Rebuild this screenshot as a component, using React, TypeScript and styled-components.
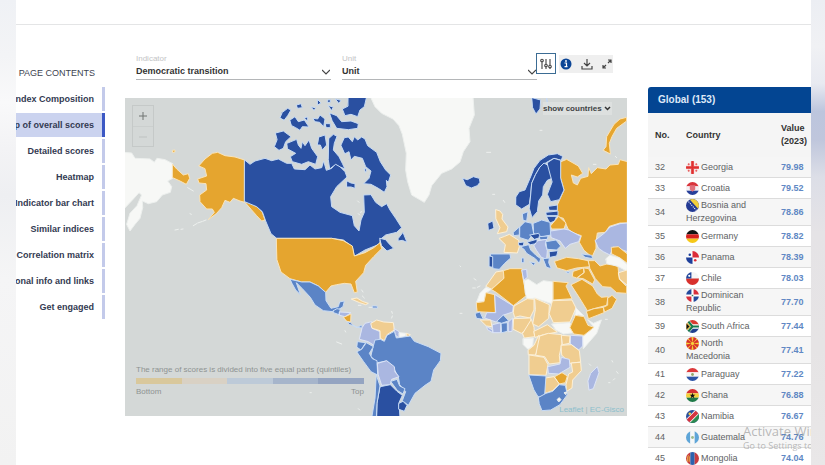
import React from "react";
import styled, { createGlobalStyle, css } from "styled-components";

const GlobalStyle = createGlobalStyle`
  * { box-sizing: border-box; }
  body { margin: 0; background: #fff; font-family: "Liberation Sans", Arial, sans-serif; color: #333; }
  button, select { font-family: inherit; }
`;

/* ---------- frame ---------- */

const Shell = styled.div`
  display: grid;
  grid-template-columns: 16px minmax(0, 1fr) 14px;
  height: 100vh;
  overflow: hidden;
`;
const LeftEdge = styled.div`
  background: linear-gradient(180deg, #eff1f5 0%, #f3f4f6 12%, #f9f9fa 22%, #f3f3f5 32%, #eeeff2 42%, #f5f5f6 60%, #f2f2f2 100%);
`;
const RightEdge = styled.div`
  background: linear-gradient(180deg, #eceef3 0%, #f0f1f4 10%, #e8eaf1 18%, #bcc5dd 24%, #bfc6dc 30%, #dcdee7 38%, #e5e3e6 50%, #e6e4e5 75%, #e9e7e8 100%);
`;
const Page = styled.div`
  position: relative;
  overflow: hidden;
  background: #fff;
`;
const Header = styled.header`
  height: 25px;
  border-bottom: 1px solid #e4e5e6;
`;
const Main = styled.main`
  display: grid;
  grid-template-columns: 89px minmax(0, 1fr) 163px;
  align-items: start;
`;

/* ---------- page contents ---------- */

const Contents = styled.nav`
  display: flex;
  flex-direction: column;
  gap: 2px;
  padding-top: 42px;
`;
const ContentsTitle = styled.div`
  height: 18px;
  padding-right: 10px;
  text-align: right;
  font-size: 9px;
  line-height: 13px;
  color: #3d4350;
  white-space: nowrap;
`;
const ContentsLink = styled.a<{ $active?: boolean }>`
  display: flex;
  justify-content: flex-end;
  height: 24px;
  padding-right: 8px;
  border-right: 3px solid ${(p) => (p.$active ? "#3c58c4" : "#c3caea")};
  background: ${(p) => (p.$active ? "#cbd3ef" : "transparent")};
  color: #333a52;
  font-size: 9px;
  font-weight: bold;
  line-height: 24px;
  text-decoration: none;
  white-space: nowrap;
`;

/* ---------- map column ---------- */

const Center = styled.section`
  padding: 28px 21px 0 20px;
`;
const Controls = styled.div`
  display: flex;
  align-items: flex-start;
  height: 45px;
  padding: 0 14px 0 11px;
`;
const Field = styled.label`
  display: block;
  position: relative;
  flex: 1;
  min-width: 0;
  border-bottom: 1px solid #b4b6b8;
  & + & { margin-left: 11px; }
`;
const FieldName = styled.span`
  display: block;
  font-size: 8px;
  line-height: 11px;
  color: #c3c4c6;
`;
const FieldSelect = styled.select`
  display: block;
  appearance: none;
  width: 100%;
  height: 15px;
  padding: 0;
  border: 0;
  background: transparent;
  color: #333;
  font-size: 9px;
  font-weight: bold;
  line-height: 15px;
`;
const FieldArrow = styled.svg`
  position: absolute;
  right: 1px;
  bottom: 4px;
  width: 8px;
  height: 6px;
`;
const Toolbar = styled.div`
  display: flex;
  align-items: center;
  margin-left: -1px;
  gap: 3px;
`;
const ToolGroup = styled.div`
  display: flex;
  height: 18px;
  background: #efefef;
`;
const Tool = styled.button<{ $framed?: boolean }>`
  display: flex;
  align-items: center;
  justify-content: center;
  width: 18px;
  height: 18px;
  padding: 0;
  border: 0;
  background: transparent;
  ${(p) => p.$framed && css`
    width: 20px;
    height: 21px;
    background: #fff;
    border: 1px solid #3b6c94;
  `}
`;
const InfoTool = styled(Tool)` width: 14px; `;
const DownloadTool = styled(Tool)` width: 28px; `;
const ExpandTool = styled(Tool)` width: 12px; `;

const MapBox = styled.div`
  position: relative;
  background: #d4d8d7;
`;
const MapArt = styled.svg`
  display: block;
  width: 100%;
  height: auto;
`;
const ZoomBox = styled.div`
  position: absolute;
  left: 7px;
  top: 7px;
  width: 22px;
  border: 1px solid #c5c9c8;
`;
const ZoomButton = styled.button<{ $off?: boolean }>`
  display: flex;
  align-items: center;
  justify-content: center;
  width: 20px;
  height: 20px;
  padding: 0;
  border: 0;
  background: transparent;
  color: ${(p) => (p.$off ? "#bec2c1" : "#707473")};
  & + & { border-top: 1px solid #cbcfce; }
`;
const CountryPicker = styled.label`
  position: absolute;
  right: 15px;
  top: 4px;
  display: flex;
  align-items: center;
  width: 69px;
  height: 13px;
  background: rgba(225, 228, 227, 0.7);
`;
const CountrySelect = styled.select`
  appearance: none;
  width: 100%;
  height: 13px;
  padding: 0;
  border: 0;
  background: transparent;
  color: #3f4344;
  font-size: 8px;
  font-weight: bold;
`;
const PickerArrow = styled.svg`
  position: absolute;
  right: 1px;
  top: 4px;
  width: 7px;
  height: 5px;
`;
const Legend = styled.div`
  position: absolute;
  left: 11px;
  bottom: 18px;
  width: 228px;
  font-size: 8px;
  line-height: 12px;
  color: #8e9392;
  white-space: nowrap;
`;
const LegendBar = styled.div`
  display: flex;
  height: 6px;
  margin: 2px 0;
`;
const LegendPart = styled.span<{ $tone: string }>`
  flex: 1;
  background: ${(p) => p.$tone};
`;
const LegendEnds = styled.div`
  display: flex;
  justify-content: space-between;
`;
const Credits = styled.div`
  position: absolute;
  right: 3px;
  bottom: 1px;
  font-size: 8px;
  line-height: 10px;
  color: #a3b9ba;
`;
const CreditLink = styled.a`
  color: #8cbfcc;
  text-decoration: none;
`;

/* ---------- ranking ---------- */

const Ranking = styled.section`
  padding-top: 62px;
`;
const RankingTitle = styled.h2`
  margin: 0;
  height: 26px;
  padding-left: 10px;
  border-radius: 3px 0 0 0;
  background: #034592;
  color: #dfe9f8;
  font-size: 10px;
  font-weight: bold;
  line-height: 26px;
`;
const Table = styled.table`
  width: 100%;
  table-layout: fixed;
  border-collapse: separate;
  border-spacing: 0;
  font-size: 9px;
  line-height: 13px;
`;
const Th = styled.th<{ $w?: number }>`
  width: ${(p) => (p.$w ? `${p.$w}px` : "auto")};
  height: 44px;
  padding: 0;
  background: #f5f5f5;
  color: #333;
  text-align: left;
  &:first-child { padding-left: 7px; }
`;
const Row = styled.tr`
  background: #fff;
  &:nth-child(odd) { background: #f6f6f6; }
`;
const Td = styled.td`
  height: 21px;
  padding: 0;
  border-bottom: 1px solid #dcdcdc;
  color: #606264;
  &:first-child { padding-left: 7px; }
`;
const CountryCell = styled(Td)`
  padding-right: 20px;
`;
const ValueCell = styled(Td)`
  color: #6088c4;
  font-weight: bold;
`;
const FlagArt = styled.svg`
  width: 13px;
  height: 13px;
  margin-right: 2px;
  vertical-align: top;
  border-radius: 50%;
`;

const Watermark = styled.div`
  position: absolute;
  left: 727px;
  bottom: 12px;
  font-family: "Open Sans", "Noto Sans", sans-serif;
  font-size: 9px;
  line-height: 14px;
  color: rgba(130, 130, 130, 0.55);
  white-space: nowrap;
  pointer-events: none;
`;
const WatermarkTitle = styled.div`
  font-size: 13px;
  line-height: 16px;
`;

/* ---------- map shapes ---------- */

const tones: Record<string, [string, string]> = {
  o: ["#e5a52f", "#fae4b9"],
  p: ["#f0cd90", "#fdf0d6"],
  l: ["#aab7e1", "#dce4f7"],
  m: ["#5b84c6", "#c9dcf5"],
  d: ["#2a50a1", "#c6daf4"],
  w: ["#f7f8f6", "#edf0ee"],
};

type Shape = [string, string];
type Sheet = { x: number; y: number; shapes: Shape[] };

const sheets: Sheet[] = [
  {
    x: 125, y: 95,
    shapes: [
      ["w", "M-6 172L20 174L30 190L75 192L88 202L96 190L120 194L143 206L143 250L128 258L140 275L136 292L112 300L95 320L70 326L52 318L53 338L45 370L30 388L15 408L5 388L15 355L36 332L50 300L42 293L25 312L-6 345Z"],
      ["o", "M143 208L155 222L175 240L190 236L194 250L184 268L165 258L143 248Z"],
      ["o", "M143 166L150 165L150 171L144 172Z"],
      ["o", "M222 212L240 192L262 175L278 172L300 182L330 186L359 195L359 322L345 318L325 310L315 322L300 316L290 338L275 355L250 374L268 352L262 342L245 342L225 320L224 300L245 285L243 266L222 264L218 252L245 243L240 222Z"],
      ["o", "M359 320L380 326L395 335L412 352L420 375L410 378L395 362L380 345Z"],
      ["w", "M205 392L215 386M218 384L230 380M233 379L243 375M150 405L160 403M168 403L174 402M188 278L205 288M195 356L199 358"],
    ],
  },
  {
    x: 265, y: 95,
    shapes: [
      ["w", "M316 5L330 35L350 55L384 72L402 92L412 118L424 175L422 225L428 260L440 300L478 322L492 300L500 272L530 235L560 222L585 201L595 170L615 140L612 100L628 60L624 5Z"],
      ["d", "M-61 195L-45 208L-30 198L0 190L20 197L40 192L65 205L80 205L88 222L120 224L135 210L150 222L170 218L176 198L184 226L200 220L212 205L225 215L240 230L246 246L215 275L197 305L200 335L225 352L262 362L268 392L282 408L288 375L298 352L296 300L318 299L332 322L350 335L365 326L375 345L392 370L410 398L395 412L362 420L345 434L345 447L300 465L268 484L262 455L235 435L200 430L35 430L18 416L2 378L-8 350L-25 335L-61 320Z"],
      ["d", "M400 430L414 412L426 442L412 436L400 438Z"],
      ["d", "M345 430L362 434L372 446L386 460L366 468L350 452Z"],
      ["d", "M228 150L238 128L250 126L262 140L268 125L278 135L290 126L300 132L308 152L335 172L346 200L362 225L377 240L370 262L364 256L366 275L358 292L340 280L318 268L296 266L312 250L318 228L302 215L292 190L268 184L258 195L252 170L240 176Z"],
      ["d", "M192 130L205 118L216 124L208 145L205 165L222 185L232 205L240 222L226 216L212 208L194 222L190 195Z"],
      ["d", "M66 145L95 133L100 150L108 160L112 140L120 152L132 135L140 160L158 185L152 208L130 200L110 208L82 200L76 185L92 175L68 162Z"],
      ["d", "M32 114L55 108L78 125L62 140L55 160L42 166L28 155L36 135Z"],
      ["d", "M162 126L180 120L185 150L172 165L166 150L158 150Z"],
      ["d", "M75 75L90 65L100 80L118 75L132 96L112 95L105 106L92 98L80 92Z"],
      ["d", "M45 68L52 52L68 40L78 45L68 62L58 75Z"],
      ["d", "M145 70L158 72L165 60L180 72L176 95L164 82L150 80Z"],
      ["d", "M194 54L215 62L230 80L258 78L280 86L278 100L250 104L215 100L202 78Z"],
      ["d", "M250 5L305 5L298 35L285 45L278 65L258 58L240 62L232 42L248 34Z"],
      ["d", "M95 30L108 26L112 38L98 40ZM118 68L128 66L128 78ZM188 15L196 14L196 22L188 22ZM138 36L152 38L148 46ZM158 14L168 24L158 30ZM190 32L205 36L200 46ZM212 12L228 16L222 25ZM182 86L196 86L196 98L184 98Z"],
      ["d", "M246 258L258 264L270 266L270 280L258 276L246 276Z"],
      ["d", "M298 220L306 224L302 232Z"],
      ["w", "M278 318L282 322M280 356L284 360M286 352L290 350"],
    ],
  },
  {
    x: 265, y: 240,
    shapes: [
      ["o", "M35 -5L200 -5L235 2L262 18L268 48L300 38L325 24L345 8L350 26L326 50L302 76L296 98L272 124L277 156L268 158L258 132L238 130L215 134L198 138L182 157L160 138L135 126L110 126L75 116L48 96L36 60Z"],
      ["m", "M76 118L110 126L135 126L160 138L182 157L183 182L198 205L220 200L224 186L238 183L234 200L222 208L212 216L175 212L150 195L136 172L112 146L94 128L106 164L92 150L82 132Z"],
      ["m", "M205 212L216 206L226 208L222 224L206 218Z"],
      ["l", "M224 216L258 218L240 230L224 226Z"],
      ["o", "M236 232L258 222L257 246L246 244Z"],
      ["d", "M246 246L256 248L264 256L256 254Z"],
      ["m", "M264 256L276 262L290 256L292 264L276 262Z"],
      ["p", "M260 177L276 174L292 184L310 190L302 194L284 188Z"],
      ["w", "M290 150L294 156M292 168L298 174M280 196L288 196M380 214L382 220M382 228L380 234M312 202L320 202M215 306L230 312M240 272L242 276M280 506L284 510M135 458L139 458"],
      ["m", "M322 198L336 198L338 204L324 204Z"],
      ["l", "M292 262L300 250L320 245L322 265L345 275L345 295L330 318L310 305L284 298Z"],
      ["p", "M318 250L335 240L356 246L385 248L388 270L366 284L358 302L346 295L345 272L322 265Z"],
      ["l", "M388 266L404 276L402 294L392 286Z"],
      ["w", "M403 278L422 280L420 292L404 292Z"],
      ["p", "M424 280L436 284L428 292Z"],
      ["m", "M325 318L330 300L346 298L358 304L366 286L388 274L394 294L436 288L448 304L490 320L528 340L526 362L506 390L498 424L480 436L450 460L430 496L412 482L422 455L404 434L400 410L390 392L365 363L338 368L318 350Z"],
      ["m", "M278 305L302 308L288 330L276 322Z"],
      ["m", "M276 335L290 328L304 308L325 320L313 340L322 356L336 362L338 405L318 395L296 365Z"],
      ["l", "M338 370L365 362L388 380L390 396L402 410L380 418L376 434L350 436L340 405Z"],
      ["m", "M378 424L396 418L404 438L420 446L414 462L398 452Z"],
      ["d", "M346 440L376 434L396 454L412 466L402 488L405 534L335 534L336 490Z"],
      ["d", "M402 490L414 484L426 496L418 514L402 508Z"],
      ["m", "M334 405L345 438L336 490L334 534L320 534L330 475Z"],
    ],
  },
  {
    x: 460, y: 95,
    shapes: [
      ["w", "M80 172L92 172M240 106L246 106M98 298L104 298M130 316L134 322M400 208L408 208M466 184L470 188"],
      ["d", "M216 8L242 15L240 42L228 57L218 38Z"],
      ["d", "M260 10L266 40L262 28Z"],
      ["d", "M8 250L22 254L40 245L58 250L60 262L52 272L34 279L18 272Z"],
      ["o", "M430 165L438 155L440 125L462 88L480 72L500 67L500 78L470 100L456 125L448 145L451 176Z"],
      ["o", "M303 200L320 193L355 213L368 235L352 246L334 240L340 264L352 270L362 250L384 244L386 218L394 236L412 218L438 222L450 210L475 208L480 194L502 200L502 384L480 384L448 394L436 412L412 414L408 440L408 460L396 486L372 466L358 442L364 422L340 414L325 403L310 370L290 364L292 330L300 312L312 285L302 250Z"],
      ["d", "M168 305L178 290L195 285L210 250L222 220L240 196L265 180L292 176L308 184L304 196L282 190L260 202L240 216L226 240L215 265L212 300L208 328L185 342L168 330Z"],
      ["d", "M240 216L252 204L272 216L276 250L262 256L250 275L248 300L236 318L232 350L216 368L208 340L212 300L215 265L226 240Z"],
      ["d", "M262 203L282 190L302 196L302 250L312 285L298 314L272 320L262 298L276 262Z"],
      ["m", "M188 356L204 350L200 378L190 376Z"],
      ["d", "M266 334L292 330L292 346L268 346ZM258 352L294 348L294 362L260 362ZM260 364L290 364L284 378L270 384Z"],
      ["o", "M272 392L296 364L318 384L312 402L275 402Z"],
      ["l", "M272 408L312 402L326 405L362 424L356 440L330 448L316 460L300 438L274 428Z"],
      ["l", "M406 436L436 412L450 396L480 386L502 384L502 470L460 456L450 480L430 470L416 460Z"],
      ["m", "M220 385L245 375L270 382L272 420L245 426L222 416Z"],
      ["m", "M180 395L195 380L215 385L221 415L205 436L180 428Z"],
      ["m", "M160 412L178 396L178 420L162 422Z"],
      ["p", "M118 430L134 424L148 418L176 436L178 455L172 474L132 472L136 450Z"],
      ["p", "M108 344L120 348L128 358L126 372L144 396L140 410L112 416L120 398L108 372Z"],
      ["d", "M84 385L98 378L102 400L86 406Z"],
    ],
  },
  {
    x: 460, y: 230,
    shapes: [
      ["d", "M210 15L236 10L242 22L224 28Z"],
      ["d", "M202 36L230 28L234 40L212 44Z"],
      ["d", "M176 38L192 36L190 48L178 47Z"],
      ["m", "M238 20L264 18L262 28L242 30Z"],
      ["l", "M234 32L260 28L256 42L262 62L260 88L244 82L230 62L222 48Z"],
      ["m", "M182 50L206 44L212 60L228 76L242 86L238 100L226 86L200 70L192 58Z"],
      ["m", "M258 35L288 30L302 48L290 60L262 58Z"],
      ["d", "M268 65L294 62L290 78L270 82Z"],
      ["m", "M250 86L268 84L266 98L274 116L260 112Z"],
      ["m", "M210 96L226 98L222 106ZM186 84L192 84L192 98L186 98Z"],
      ["m", "M92 72L150 72L152 84L134 100L118 118L100 116L94 100Z"],
      ["d", "M88 78L98 80L98 112L88 110Z"],
      ["o", "M284 94L320 82L355 86L384 92L390 110L350 114L320 122L292 114Z"],
      ["m", "M365 72L395 76L398 86L376 82Z"],
      ["m", "M318 126L328 124L326 130Z"],
      ["o", "M340 124L370 114L372 128L350 144L338 140ZM372 114L386 116L404 150L398 162L370 146L352 144L372 128Z"],
      ["o", "M386 92L404 92L420 108L448 100L474 110L478 148L500 170L500 190L470 188L452 172L428 170L406 146L390 116Z"],
      ["o", "M334 164L366 148L398 168L412 192L424 202L444 200L440 226L402 236L382 242L360 206Z"],
      ["o", "M380 244L402 236L430 232L432 248L386 266Z"],
      ["o", "M444 204L456 196L470 208L456 235L434 246L430 232L442 226Z"],
      ["o", "M455 52L475 50L502 72L502 100L480 84L456 72Z"],
      ["w", "M438 86L450 76L478 84L502 104L502 124L472 108L442 102Z"],
      ["p", "M476 128L502 120L502 166L480 148Z"],
      ["p", "M78 168L108 126L130 122L132 145L95 177Z"],
      ["w", "M50 216L60 190L78 172L94 178L76 190L72 214Z"],
      ["o", "M50 218L72 215L78 188L104 194L106 248L52 245Z"],
      ["o", "M95 178L132 145L130 122L150 116L186 116L190 150L200 196L160 227L110 188Z"],
      ["l", "M186 120L200 118L202 142L192 150Z"],
      ["w", "M193 152L205 148L230 164L250 152L278 156L278 222L225 204L202 208L196 190Z"],
      ["o", "M280 154L325 158L318 168L336 206L280 210Z"],
      ["l", "M105 194L160 228L158 246L128 256L108 276L74 264L80 248L106 248Z"],
      ["p", "M160 246L162 228L202 206L222 208L222 240L210 264L180 258L165 262Z"],
      ["p", "M225 205L268 224L266 265L236 290L218 282L226 240Z"],
      ["p", "M278 212L336 210L348 234L330 276L280 278L268 252Z"],
      ["w", "M276 282L330 278L340 308L310 312L288 300Z"],
      ["w", "M348 234L372 258L354 254L344 262Z"],
      ["w", "M384 270L400 280L424 270L410 310L370 356L368 320L402 292Z"],
      ["o", "M330 292L346 256L372 260L384 286L402 292L372 316L342 312Z"],
      ["l", "M332 316L368 318L368 348L356 360L332 342Z"],
      ["p", "M162 266L212 264L214 284L200 298L184 310L160 298Z"],
      ["m", "M46 250L60 246L70 268L50 265Z"],
      ["p", "M62 270L92 270L96 290L80 288Z"],
      ["l", "M80 290L98 300L98 308L84 300Z"],
      ["l", "M98 284L122 278L122 308L100 308Z"],
      ["m", "M110 274L130 255L146 272L126 280Z"],
      ["m", "M124 280L142 278L142 304L126 308Z"],
      ["l", "M145 276L158 264L156 304L146 305Z"],
      ["p", "M188 310L214 268L222 292L224 320L194 324Z"],
      ["p", "M222 304L262 284L292 306L250 314L226 322Z"],
      ["w", "M190 326L220 324L218 348L204 358L190 344Z"],
      ["p", "M205 360L222 346L236 316L242 345L226 375L206 374Z"],
      ["p", "M240 318L265 310L305 314L306 340L298 376L300 398L268 402L254 380L228 376Z"],
      ["p", "M305 316L330 318L328 340L308 344Z"],
      ["p", "M304 346L334 344L358 362L362 396L330 400L306 376Z"],
      ["p", "M208 375L252 382L264 404L258 436L208 434Z"],
      ["p", "M362 398L364 422L338 450L336 474L320 484L318 464L326 432L338 426L334 400Z"],
      ["l", "M264 410L300 402L304 382L328 388L330 412L296 432L266 430Z"],
      ["o", "M284 440L306 428L322 438L316 458L298 462Z"],
      ["p", "M256 444L282 440L298 462L278 482L255 490Z"],
      ["m", "M207 435L258 438L254 494L248 502L234 500L222 480Z"],
      ["m", "M236 502L258 490L278 484L298 464L316 466L322 494L300 524L272 540L246 542L238 522Z"],
      ["w", "M292 508L298 503L303 509L297 515ZM313 488L319 486L318 493Z"],
      ["l", "M384 452L392 430L412 410L417 428L400 476L388 480Z"],
      ["w", "M42 146L48 150M38 174L46 174M52 172L60 168M0 108L2 110M0 250L6 250M436 268L442 268M388 402L392 406M456 392L458 396M446 458L450 458M460 450L464 446M470 425L474 430"],
    ],
  },
];

const WorldMap = () => (
  <MapArt viewBox="125 98 502 318" role="img" aria-label="World map of overall scores">
    {sheets.map((s, i) => (
      <g key={i} transform={`translate(${s.x} ${s.y}) scale(0.33333)`} strokeLinejoin="round" strokeLinecap="round">
        {s.shapes.map(([tone, d], j) => (
          <path key={j} d={d} fill={tones[tone][0]} stroke={tones[tone][1]} strokeWidth="3" />
        ))}
      </g>
    ))}
  </MapArt>
);

/* ---------- flags ---------- */

const Bands = ({ c }: { c: string[] }) => (
  <>{c.map((f, i) => <rect key={i} y={(12 / c.length) * i} width="12" height={12 / c.length} fill={f} />)}</>
);
const Columns = ({ c }: { c: string[] }) => (
  <>{c.map((f, i) => <rect key={i} x={(12 / c.length) * i} width={12 / c.length} height="12" fill={f} />)}</>
);

const flags: Record<string, React.ReactNode> = {
  Georgia: <><rect width="12" height="12" fill="#f8f2f2" /><path d="M5 0h2v5h5v2H7v5H5V7H0V5h5zM2.5 2v2M1.5 3h2M9.5 2v2M8.5 3h2M2.5 8v2M1.5 9h2M9.5 8v2M8.5 9h2" fill="#e03030" stroke="#e03030" strokeWidth=".6" /></>,
  Croatia: <><Bands c={["#d9343c", "#f4f0f4", "#28409a"]} /><path d="M3.5 3h5v4l-2.5 2-2.5-2z" fill="#e0707c" /></>,
  "Bosnia and Herzegovina": <><rect width="12" height="12" fill="#233a94" /><path d="M3 0h9v10z" fill="#f2cf3c" /><path d="M1 1l9 10" stroke="#fff" strokeWidth="1" strokeDasharray="1 1" /></>,
  Germany: <Bands c={["#141414", "#d8201e", "#f6c818"]} />,
  Panama: <><rect width="12" height="12" fill="#fafafa" /><path d="M6 0h6v6H6z" fill="#dc2c38" /><path d="M0 6h6v6H0z" fill="#1e3f9a" /><circle cx="3.5" cy="3.5" r="1.2" fill="#1e3f9a" /><circle cx="8.5" cy="8.5" r="1.2" fill="#dc2c38" /></>,
  Chile: <><rect width="12" height="12" fill="#f6f6f6" /><path d="M0 6h12v6H0z" fill="#d8302c" /><path d="M0 0h5v6H0z" fill="#22479c" /><circle cx="3" cy="3.5" r="1" fill="#fff" /></>,
  "Dominican Republic": <><rect width="12" height="12" fill="#fff" /><path d="M0 0h5v5H0zM7 7h5v5H7z" fill="#244a9c" /><path d="M7 0h5v5H7zM0 7h5v5H0z" fill="#d8303c" /><circle cx="6" cy="6" r=".8" fill="#3d7a54" /></>,
  "South Africa": <><path d="M0 0h12v6H0z" fill="#d93a30" /><path d="M0 6h12v6H0z" fill="#20408e" /><path d="M0 0l5.500 6L0 12M5 6h7" fill="none" stroke="#fff" strokeWidth="4" /><path d="M0 2v8l4-4z" fill="#111" stroke="#ecc04a" /><path d="M1 0l5 6-5 6M5 6h7" fill="none" stroke="#187a4c" strokeWidth="2" /></>,
  "North Macedonia": <><rect width="12" height="12" fill="#d8322a" /><path d="M6 6L5 0h2zM6 6l6-1v2zM6 6l1 6H5zM6 6L0 7V5zM6 6L0 1l1-1zM6 6l5-6 1 1zM6 6l6 5-1 1zM6 6l-5 6-1-1z" fill="#f6cf3a" /><circle cx="6" cy="6" r="2" fill="#f6cf3a" stroke="#d8322a" strokeWidth=".7" /></>,
  Paraguay: <><Bands c={["#dc3a3c", "#f6f6f6", "#2c55a8"]} /><circle cx="6" cy="6" r="1.300" fill="#92a86c" /></>,
  Ghana: <><Bands c={["#d43030", "#f5d03a", "#1f7a48"]} /><path d="M6 3.500l.7 1.800h2L7.100 6.500l.6 2L6 7.300 4.300 8.500l.6-2-1.600-1.200h2z" fill="#111" /></>,
  Namibia: <><rect width="12" height="12" fill="#2a4f9c" /><path d="M12 2v10H2z" fill="#2c8a50" /><path d="M0 12L12 0" stroke="#fff" strokeWidth="5" /><path d="M0 12L12 0" stroke="#d43440" strokeWidth="3.500" /><circle cx="3.500" cy="3.500" r="1.200" fill="#f6d040" /></>,
  Guatemala: <><Columns c={["#5ea5d8", "#f6f8f8", "#5ea5d8"]} /><circle cx="6" cy="6" r="1.300" fill="#9cba8c" /></>,
  Mongolia: <><Columns c={["#c63c40", "#2c62ae", "#c63c40"]} /><path d="M1.500 4v5M3 4v5M2.200 3v1" stroke="#eec044" strokeWidth=".8" /></>,
};

const rows: [number, string, string][] = [
  [32, "Georgia", "79.98"],
  [33, "Croatia", "79.52"],
  [34, "Bosnia and Herzegovina", "78.86"],
  [35, "Germany", "78.82"],
  [36, "Panama", "78.39"],
  [37, "Chile", "78.03"],
  [38, "Dominican Republic", "77.70"],
  [39, "South Africa", "77.44"],
  [40, "North Macedonia", "77.41"],
  [41, "Paraguay", "77.22"],
  [42, "Ghana", "76.88"],
  [43, "Namibia", "76.67"],
  [44, "Guatemala", "74.76"],
  [45, "Mongolia", "74.04"],
];

const links = [
  "Index Composition",
  "Map of overall scores",
  "Detailed scores",
  "Heatmap",
  "Indicator bar chart",
  "Similar indices",
  "Correlation matrix",
  "Additional info and links",
  "Get engaged",
];

const legendTones = ["#d9c89c", "#d9d1c4", "#bdcad8", "#a6b5cb", "#94a4c1"];

const Arrow = () => (
  <FieldArrow viewBox="0 0 8 6" aria-hidden="true">
    <path d="M0 1l4 4 4-4" fill="none" stroke="#444" strokeWidth="1.2" />
  </FieldArrow>
);

export default function App() {
  return (
    <>
      <GlobalStyle />
      <Shell>
        <LeftEdge />
        <Page>
          <Header />
          <Main>
            <Contents aria-label="Page contents">
              <ContentsTitle>PAGE CONTENTS</ContentsTitle>
              {links.map((text, i) => (
                <ContentsLink key={text} href={`#section-${i}`} $active={i === 1}>{text}</ContentsLink>
              ))}
            </Contents>

            <Center>
              <Controls>
                <Field>
                  <FieldName>Indicator</FieldName>
                  <FieldSelect><option>Democratic transition</option></FieldSelect>
                  <Arrow />
                </Field>
                <Field>
                  <FieldName>Unit</FieldName>
                  <FieldSelect><option>Unit</option></FieldSelect>
                  <Arrow />
                </Field>
                <Toolbar>
                  <Tool $framed aria-label="Settings">
                    <svg width="12" height="12" viewBox="0 0 12 12" fill="none" stroke="#444" strokeWidth="1.100">
                      <path d="M2 4v7M6 1v5M6 9v2M10 1v6M10 10v1" />
                      <circle cx="2" cy="2.500" r="1.300" />
                      <circle cx="6" cy="7.500" r="1.300" />
                      <circle cx="10" cy="8.500" r="1.300" />
                    </svg>
                  </Tool>
                  <ToolGroup>
                    <InfoTool aria-label="Information">
                      <svg width="12" height="12" viewBox="0 0 12 12">
                        <circle cx="6" cy="6" r="5.500" fill="#0b4596" />
                        <path d="M4.500 5H6.500V8.500M4.500 8.700h3" fill="none" stroke="#fff" strokeWidth="1.200" />
                        <circle cx="6" cy="3" r=".9" fill="#fff" />
                      </svg>
                    </InfoTool>
                    <DownloadTool aria-label="Download">
                      <svg width="12" height="12" viewBox="0 0 12 12" fill="none" stroke="#444" strokeWidth="1.200">
                        <path d="M6 1v7M3 5l3 3 3-3M1 8v3h10V8" />
                      </svg>
                    </DownloadTool>
                    <ExpandTool aria-label="Full screen">
                      <svg width="10" height="10" viewBox="0 0 10 10" fill="none" stroke="#444" strokeWidth="1.200">
                        <path d="M6 4l3-3M6 1h3v3M4 6L1 9M1 6v3h3" />
                      </svg>
                    </ExpandTool>
                  </ToolGroup>
                </Toolbar>
              </Controls>

              <MapBox>
                <WorldMap />
                <ZoomBox>
                  <ZoomButton aria-label="Zoom in">
                    <svg width="8" height="8" viewBox="0 0 8 8" stroke="currentColor"><path d="M4 0v8M0 4h8" /></svg>
                  </ZoomButton>
                  <ZoomButton $off aria-label="Zoom out">
                    <svg width="8" height="8" viewBox="0 0 8 8" stroke="currentColor"><path d="M0 4h8" /></svg>
                  </ZoomButton>
                </ZoomBox>
                <CountryPicker>
                  <CountrySelect aria-label="Countries"><option>show countries</option></CountrySelect>
                  <PickerArrow viewBox="0 0 7 5" aria-hidden="true">
                    <path d="M1 1l2.500 2.500L6 1" fill="none" stroke="#333" strokeWidth="1.500" />
                  </PickerArrow>
                </CountryPicker>
                <Legend>
                  The range of scores is divided into five equal parts (quintiles)
                  <LegendBar>
                    {legendTones.map((t) => <LegendPart key={t} $tone={t} />)}
                  </LegendBar>
                  <LegendEnds><span>Bottom</span><span>Top</span></LegendEnds>
                </Legend>
                <Credits>
                  <CreditLink href="#leaflet">Leaflet</CreditLink> | <CreditLink href="#gisco">EC-Gisco</CreditLink>
                </Credits>
              </MapBox>
            </Center>

            <Ranking>
              <RankingTitle>Global (153)</RankingTitle>
              <Table>
                <thead>
                  <tr>
                    <Th $w={38}>No.</Th>
                    <Th>Country</Th>
                    <Th $w={30}>Value (2023)</Th>
                  </tr>
                </thead>
                <tbody>
                  {rows.map(([no, name, value]) => (
                    <Row key={no}>
                      <Td>{no}</Td>
                      <CountryCell>
                        <FlagArt viewBox="0 0 12 12" aria-hidden="true">{flags[name]}</FlagArt>
                        {name}
                      </CountryCell>
                      <ValueCell>{value}</ValueCell>
                    </Row>
                  ))}
                </tbody>
              </Table>
            </Ranking>
          </Main>
          <Watermark>
            <WatermarkTitle>Activate Windows</WatermarkTitle>
            Go to Settings to activate Windows.
          </Watermark>
        </Page>
        <RightEdge />
      </Shell>
    </>
  );
}
